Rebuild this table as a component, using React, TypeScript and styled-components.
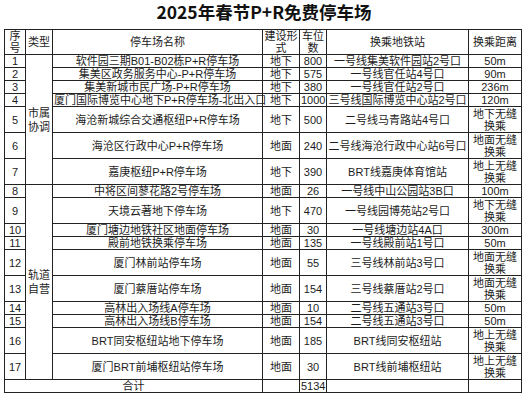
import React from 'react';
import styled, { createGlobalStyle } from 'styled-components';

interface ParkRow {
  name: string;
  build: string;
  spaces: string;
  station: string;
  distance: string;
  tall?: boolean;
}

const rows: ParkRow[] = [
  { name: '软件园三期B01-B02栋P+R停车场', build: '地下', spaces: '800', station: '一号线集美软件园站2号口', distance: '50m' },
  { name: '集美区政务服务中心-P+R停车场', build: '地下', spaces: '575', station: '一号线官任站4号口', distance: '90m' },
  { name: '集美新城市民广场-P+R停车场', build: '地下', spaces: '380', station: '一号线官任站2号口', distance: '236m' },
  { name: '厦门国际博览中心地下P+R停车场-北出入口', build: '地下', spaces: '1000', station: '三号线国际博览中心站2号口', distance: '120m' },
  { name: '海沧新城综合交通枢纽P+R停车场', build: '地下', spaces: '500', station: '二号线马青路站4号口', distance: '地下无缝换乘', tall: true },
  { name: '海沧区行政中心P+R停车场', build: '地面', spaces: '240', station: '二号线海沧行政中心站6号口', distance: '地面无缝换乘', tall: true },
  { name: '嘉庚枢纽P+R停车场', build: '地下', spaces: '390', station: 'BRT线嘉庚体育馆站', distance: '地上无缝换乘', tall: true },
  { name: '中将区间蓼花路2号停车场', build: '地面', spaces: '26', station: '一号线中山公园站3B口', distance: '100m' },
  { name: '天境云著地下停车场', build: '地下', spaces: '470', station: '一号线园博苑站2号口', distance: '地下无缝换乘', tall: true },
  { name: '厦门塘边地铁社区地面停车场', build: '地面', spaces: '30', station: '一号线塘边站4A口', distance: '300m' },
  { name: '殿前地铁换乘停车场', build: '地面', spaces: '135', station: '一号线殿前站1号口', distance: '50m' },
  { name: '厦门林前站停车场', build: '地面', spaces: '55', station: '三号线林前站3号口', distance: '地面无缝换乘', tall: true },
  { name: '厦门蔡厝站停车场', build: '地面', spaces: '154', station: '三号线蔡厝站2号口', distance: '地面无缝换乘', tall: true },
  { name: '高林出入场线A停车场', build: '地面', spaces: '10', station: '二号线五通站3号口', distance: '50m' },
  { name: '高林出入场线B停车场', build: '地面', spaces: '154', station: '二号线五通站3号口', distance: '50m' },
  { name: 'BRT同安枢纽站地下停车场', build: '地面', spaces: '185', station: 'BRT线同安枢纽站', distance: '地上无缝换乘', tall: true },
  { name: '厦门BRT前埔枢纽站停车场', build: '地面', spaces: '30', station: 'BRT线前埔枢纽站', distance: '地上无缝换乘', tall: true },
];

const columnWidths = [21, 27, 210, 37, 27, 142, 53];

const GlobalStyle = createGlobalStyle`
  html, body {
    margin: 0;
    padding: 0;
    background: #ffffff;
  }
  body {
    font-family: "Liberation Sans", "Noto Sans CJK SC", sans-serif;
    color: #1c1c1c;
  }
`;

const Page = styled.div`
  width: 528px;
  height: 400px;
  padding: 0 0 0 4px;
  box-sizing: border-box;
  overflow: hidden;
`;

const Title = styled.h1`
  margin: 0 0 5px -4px;
  height: 24px;
  font-family: "Noto Sans CJK SC", sans-serif;
  font-size: 17.5px;
  line-height: 24px;
  font-weight: 700;
  text-align: center;
  color: #111111;
`;

const Table = styled.table`
  width: 517px;
  table-layout: fixed;
  border-collapse: collapse;
  font-size: 11px;
`;

const HeadRow = styled.tr`
  height: 25px;
`;

const BodyRow = styled.tr<{ $tall?: boolean }>`
  height: ${({ $tall }) => ($tall ? '26px' : '13px')};
`;

const HeadCell = styled.th`
  border: 1px solid #222222;
  padding: 0 1px;
  font-weight: 400;
  line-height: 12px;
  text-align: center;
  vertical-align: middle;
`;

const Cell = styled.td<{ $nowrap?: boolean }>`
  border: 1px solid #222222;
  padding: 0 1px;
  line-height: 12px;
  text-align: center;
  vertical-align: middle;
  white-space: ${({ $nowrap }) => ($nowrap ? 'nowrap' : 'normal')};
  overflow: visible;
`;

const TypeCell = styled(Cell)`
  line-height: 14px;
`;

export default function App() {
  return (
    <>
      <GlobalStyle />
      <Page>
        <Title>2025年春节P+R免费停车场</Title>
        <Table>
          <colgroup>
            {columnWidths.map((w, i) => (
              <col key={i} style={{ width: w }} />
            ))}
          </colgroup>
          <thead>
            <HeadRow>
              <HeadCell>序号</HeadCell>
              <HeadCell>类型</HeadCell>
              <HeadCell>停车场名称</HeadCell>
              <HeadCell>建设形式</HeadCell>
              <HeadCell>车位数</HeadCell>
              <HeadCell>换乘地铁站</HeadCell>
              <HeadCell>换乘距离</HeadCell>
            </HeadRow>
          </thead>
          <tbody>
            {rows.map((row, i) => (
              <BodyRow key={i} $tall={row.tall}>
                <Cell>{i + 1}</Cell>
                {i === 0 && <TypeCell rowSpan={7}>市属协调</TypeCell>}
                {i === 7 && <TypeCell rowSpan={10}>轨道自营</TypeCell>}
                <Cell $nowrap>{row.name}</Cell>
                <Cell>{row.build}</Cell>
                <Cell $nowrap>{row.spaces}</Cell>
                <Cell $nowrap>{row.station}</Cell>
                <Cell>{row.distance}</Cell>
              </BodyRow>
            ))}
            <BodyRow>
              <Cell colSpan={3}>合计</Cell>
              <Cell />
              <Cell>5134</Cell>
              <Cell />
              <Cell />
            </BodyRow>
          </tbody>
        </Table>
      </Page>
    </>
  );
}
